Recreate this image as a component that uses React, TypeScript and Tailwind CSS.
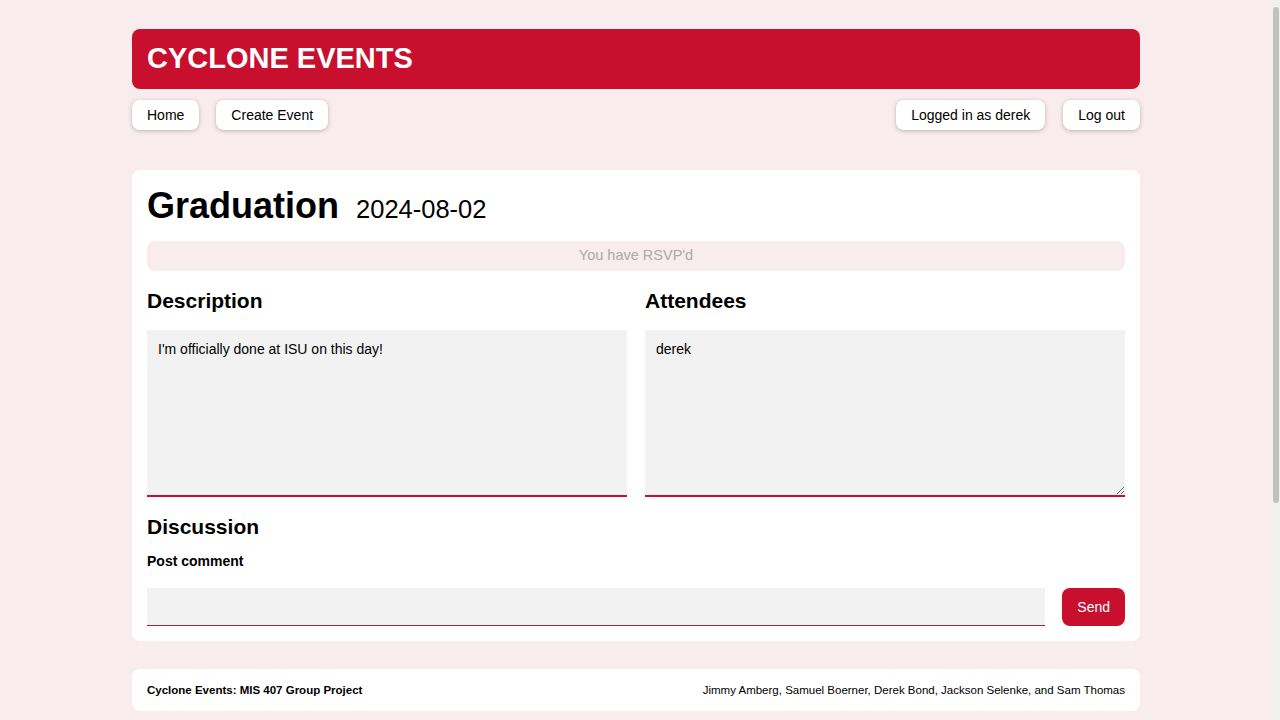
import { useState } from "react";

const navButton = "rounded-lg bg-white px-[15px] h-[30px] flex items-center text-[14px] text-black shadow-[0_1px_4px_rgba(0,0,0,0.25)]";
const boxClass = "h-[167px] w-full bg-[#f2f2f2] px-[11px] pt-[9px] text-[14px] text-black border-b-2 border-[#c8102e] outline-none";

export default function App() {
  const [comment, setComment] = useState("");

  return (
    <div className="min-h-[1025px] bg-[#f9ecee] pr-[8px] font-['Liberation_Sans',Arial,sans-serif] text-black">
      <div className="mx-auto w-[1008px] pt-[29px]">
        <header className="flex h-[60px] items-center rounded-lg bg-[#c8102e] px-[15px]">
          <h1 className="text-[29px] font-bold text-white">CYCLONE EVENTS</h1>
        </header>

        <nav className="mt-[11px] flex items-center">
          <a className={navButton} href="#">Home</a>
          <a className={`${navButton} ml-[17px]`} href="#">Create Event</a>
          <span className={`${navButton} ml-auto`}>Logged in as derek</span>
          <a className={`${navButton} ml-[18px]`} href="#">Log out</a>
        </nav>

        <main className="mt-[40px] rounded-lg bg-white px-[15px] pt-[14px] pb-[15px]">
          <div className="flex items-baseline gap-[17px]">
            <h2 className="text-[36px] font-bold leading-[44px]">Graduation</h2>
            <span className="text-[25.5px]">2024-08-02</span>
          </div>

          <div className="mt-[13px] flex h-[30px] items-center justify-center rounded-lg bg-[#f9ecee] text-[14.5px] text-[#aaaaaa]">
            You have RSVP'd
          </div>

          <div className="mt-[17px] grid grid-cols-2 gap-[18px]">
            <section>
              <h3 className="text-[21px] font-bold leading-[26px]">Description</h3>
              <textarea className={`${boxClass} mt-[16px] resize-none`} readOnly value="I'm officially done at ISU on this day!" />
            </section>
            <section>
              <h3 className="text-[21px] font-bold leading-[26px]">Attendees</h3>
              <textarea className={`${boxClass} mt-[16px] resize-y`} readOnly value="derek" />
            </section>
          </div>

          <h3 className="mt-[10px] text-[21px] font-bold leading-[26px]">Discussion</h3>
          <label className="mt-[11px] block text-[14px] font-bold">Post comment</label>
          <div className="mt-[16px] flex items-center gap-[17px]">
            <input
              className="h-[38px] flex-1 border-b border-[#a3283a] bg-[#f2f2f2] px-[10px] text-[14px] outline-none"
              onChange={(event) => setComment(event.target.value)}
              value={comment}
            />
            <button className="h-[38px] rounded-lg bg-[#c8102e] px-[15px] text-[14px] text-white" type="button">Send</button>
          </div>
        </main>

        <footer className="mt-[28px] flex h-[42px] items-center justify-between rounded-lg bg-white px-[15px] text-[11.5px]">
          <span className="font-bold">Cyclone Events: MIS 407 Group Project</span>
          <span>Jimmy Amberg, Samuel Boerner, Derek Bond, Jackson Selenke, and Sam Thomas</span>
        </footer>
      </div>

      {/* browser scrollbar as seen in the screenshot */}
      <div className="fixed top-0 right-0 flex h-screen w-[8px] flex-col bg-[#f1f1f1] px-px py-[7px]">
        <div className="h-[496px] rounded-sm bg-[#c1c1c1]" />
      </div>
    </div>
  );
}
